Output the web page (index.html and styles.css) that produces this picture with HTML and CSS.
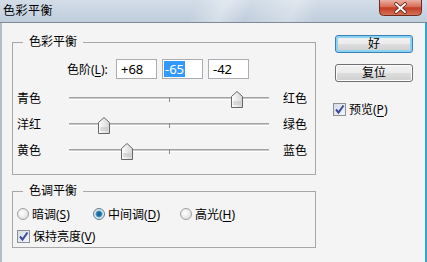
FILE: index.html
```html
<!DOCTYPE html>
<html lang="zh-CN">

<head>
  <meta charset="UTF-8">
  <title>色彩平衡</title>
  <link rel="stylesheet" href="styles.css">
</head>

<body>
  <div class="window">
    <!-- Title bar -->
    <div class="titlebar">
      <span class="title">色彩平衡</span>
      <span class="close">
        <svg width="43" height="16" viewBox="0 0 43 16">
          <defs>
            <linearGradient id="red" x1="0" y1="0" x2="0" y2="1">
              <stop offset="0" stop-color="#eab0a4" />
              <stop offset="0.45" stop-color="#d86a55" />
              <stop offset="0.5" stop-color="#c23a22" />
              <stop offset="1" stop-color="#d8775c" />
            </linearGradient>
          </defs>
          <path d="M0.5 0 V11.5 Q0.5 15.5 4.5 15.5 H38.5 Q42.5 15.5 42.5 11.5 V0" fill="url(#red)" stroke="#6e2a1e" />
          <path d="M17 4 L26 12 M26 4 L17 12" stroke="#5a1f15" stroke-width="3.6" stroke-linecap="round" />
          <path d="M17 4 L26 12 M26 4 L17 12" stroke="#ffffff" stroke-width="2" stroke-linecap="round" />
        </svg>
      </span>
    </div>

    <div class="client">
      <div class="main">
        <!-- Color balance group -->
        <fieldset class="group balance">
          <legend>色彩平衡</legend>
          <div class="levels">
            <span class="levels-label">色阶(<u>L</u>):</span>
            <span class="field">+68</span>
            <span class="field"><span class="sel">-65</span></span>
            <span class="field">-42</span>
          </div>

          <div class="sliders">
            <div class="slider-row">
              <span class="side-label">青色</span>
              <div class="track"><span class="thumb" style="left: 84%"></span></div>
              <span class="side-label">红色</span>
            </div>
            <div class="slider-row">
              <span class="side-label">洋红</span>
              <div class="track"><span class="thumb" style="left: 17.5%"></span></div>
              <span class="side-label">绿色</span>
            </div>
            <div class="slider-row">
              <span class="side-label">黄色</span>
              <div class="track"><span class="thumb" style="left: 29%"></span></div>
              <span class="side-label">蓝色</span>
            </div>
          </div>
        </fieldset>

        <!-- Tone balance group -->
        <fieldset class="group tone">
          <legend>色调平衡</legend>
          <div class="radios">
            <label class="radio"><span class="dot"></span><span>暗调(<u>S</u>)</span></label>
            <label class="radio"><span class="dot on"></span><span>中间调(<u>D</u>)</span></label>
            <label class="radio"><span class="dot"></span><span>高光(<u>H</u>)</span></label>
          </div>
          <label class="check"><span class="box"><svg width="11" height="11" viewBox="0 0 11 11"><path d="M2 5.5 L4.5 8.5 L9.5 1.5" fill="none" stroke="#3b4a9a" stroke-width="2" /></svg></span><span>保持亮度(<u>V</u>)</span></label>
        </fieldset>
      </div>

      <!-- Buttons -->
      <div class="side-col">
        <button class="btn default">好</button>
        <button class="btn">复位</button>
        <label class="check preview"><span class="box"><svg width="11" height="11" viewBox="0 0 11 11"><path d="M2 5.5 L4.5 8.5 L9.5 1.5" fill="none" stroke="#3b4a9a" stroke-width="2" /></svg></span><span>预览(<u>P</u>)</span></label>
      </div>
    </div>
  </div>
</body>

</html>
```

FILE: styles.css
```css
body {
  margin: 0;
  font-family: "Noto Sans", "Noto Sans CJK SC", sans-serif;
  font-size: 12px;
  color: #000;
  background: #f4f4f4;
  text-autospace: no-autospace;
}

u {
  text-underline-offset: 2px;
}

.window {
  width: 427px;
  height: 262px;
  display: flex;
  flex-direction: column;
  overflow: hidden;
}

/* title bar */
.titlebar {
  height: 22px;
  display: flex;
  align-items: flex-start;
  justify-content: space-between;
  border-bottom: 1px solid #7f8a96;
  background:
    linear-gradient(115deg, transparent 0 45%, rgba(255, 255, 255, 0.35) 52%, transparent 58%, rgba(255, 255, 255, 0.3) 68%, transparent 74%),
    linear-gradient(to bottom, #d3dde8, #bfcddc);
}

.title {
  padding-left: 3px;
  line-height: 22px;
  font-size: 12px;
  letter-spacing: 0.5px;
}

.close {
  width: 43px;
  height: 16px;
  margin-right: 5px;
  display: block;
}

.close svg {
  display: block;
}

.client {
  flex: 1;
  display: flex;
  border-left: 2px solid #b4bcc6;
  border-right: 2px solid #2fa6d9;
  background: #f4f4f4;
}

.main {
  flex: none;
  width: 314px;
  box-sizing: border-box;
  padding: 12px 0 0 10px;
}

/* group boxes */
.group {
  box-sizing: border-box;
  width: 304px;
  margin: 0;
  padding: 0 0 0 4px;
  min-width: 0;
  border: 1px solid #a7a7a7;
}

.group legend {
  margin-left: 6px;
  padding: 0 6px;
  line-height: 14px;
}

.balance {
  padding-bottom: 11px;
}

.levels {
  display: flex;
  align-items: center;
  margin-top: 10px;
  padding-left: 50px;
  height: 20px;
}

.levels-label {
  flex: none;
  width: 43px;
  margin-right: 6px;
  white-space: nowrap;
}

.field {
  flex: none;
  box-sizing: border-box;
  width: 41px;
  height: 20px;
  margin-right: 5px;
  padding: 0 4px;
  display: flex;
  align-items: center;
  font-size: 13px;
  background: #fff;
  border: 1px solid #abadb3;
}

.sel {
  background: #3399ff;
  color: #fff;
  line-height: 16px;
  margin-left: -3px;
  padding: 0 1px;
}

/* sliders */
.sliders {
  margin-top: 6px;
}

.slider-row {
  display: flex;
  align-items: center;
  height: 26px;
}

.side-label {
  flex: none;
  width: 52px;
  white-space: nowrap;
}

.track {
  flex: none;
  position: relative;
  width: 200px;
  height: 1px;
  margin-right: 14px;
  background: #c8c8c8;
  border-top: 1px solid #a4a4a4;
  border-bottom: 1px solid #ffffff;
}

.track::after {
  content: "";
  position: absolute;
  left: 100px;
  top: -1px;
  width: 1px;
  height: 5px;
  background: #8c8c8c;
}

.thumb {
  position: absolute;
  top: -7px;
  width: 12px;
  height: 17px;
  margin-left: -6px;
  z-index: 1;
  background: url("data:image/svg+xml;utf8,<svg xmlns='http://www.w3.org/2000/svg' width='12' height='17'><defs><linearGradient id='g' x1='0' y1='0' x2='1' y2='0'><stop offset='0' stop-color='%23ffffff'/><stop offset='1' stop-color='%23d4d4d4'/></linearGradient></defs><path d='M0.5 5.5 L6 0.5 L11.5 5.5 V16.5 H0.5 Z' fill='url(%23g)' stroke='%23666'/><path d='M2 11 H10 M2 13 H10' stroke='%23c0c0c0'/></svg>") no-repeat;
}

/* tone group */
.tone {
  margin-top: 9px;
  padding-bottom: 2px;
}

.radios {
  display: grid;
  grid-template-columns: 76px 87px auto;
  margin-top: 7px;
  height: 18px;
  align-items: center;
}

.radio {
  display: flex;
  align-items: center;
  gap: 3px;
  white-space: nowrap;
}

.dot {
  flex: none;
  box-sizing: border-box;
  width: 12px;
  height: 12px;
  border-radius: 50%;
  border: 1px solid #a0a0a0;
  background: radial-gradient(circle at 40% 40%, #ffffff, #d6d6d6);
}

.dot.on {
  border-color: #5e7f98;
  background: radial-gradient(circle, #1e6a9c 0 2px, #4fa0d0 3px, #e6eef4 4px, #d0d8de 6px);
}

.check {
  display: flex;
  align-items: center;
  gap: 3px;
  height: 18px;
  margin-top: 4px;
  white-space: nowrap;
}

.box {
  flex: none;
  box-sizing: border-box;
  width: 13px;
  height: 13px;
  display: flex;
  align-items: center;
  justify-content: center;
  border: 1px solid #8e8f96;
  background: linear-gradient(135deg, #d6dbe6, #f4f6fa);
}

.box svg {
  display: block;
}

/* right column */
.side-col {
  flex: none;
  display: flex;
  flex-direction: column;
  align-items: flex-start;
  padding: 12px 0 0 19px;
}

.btn {
  box-sizing: border-box;
  width: 78px;
  height: 18px;
  padding: 0;
  font-family: inherit;
  font-size: 12px;
  line-height: 16px;
  color: #000;
  border: 1px solid #707070;
  border-radius: 3px;
  background: linear-gradient(to bottom, #f2f2f2 0%, #ebebeb 50%, #dddddd 51%, #cfcfcf 100%);
  box-shadow: inset 0 0 0 1px #fcfcfc;
}

.btn.default {
  border-color: #3c7fb1;
  box-shadow: inset 0 0 0 2px #8bd3f2;
}

.btn + .btn {
  margin-top: 11px;
}

.preview {
  margin: 18px 0 0 -2px;
}
```
